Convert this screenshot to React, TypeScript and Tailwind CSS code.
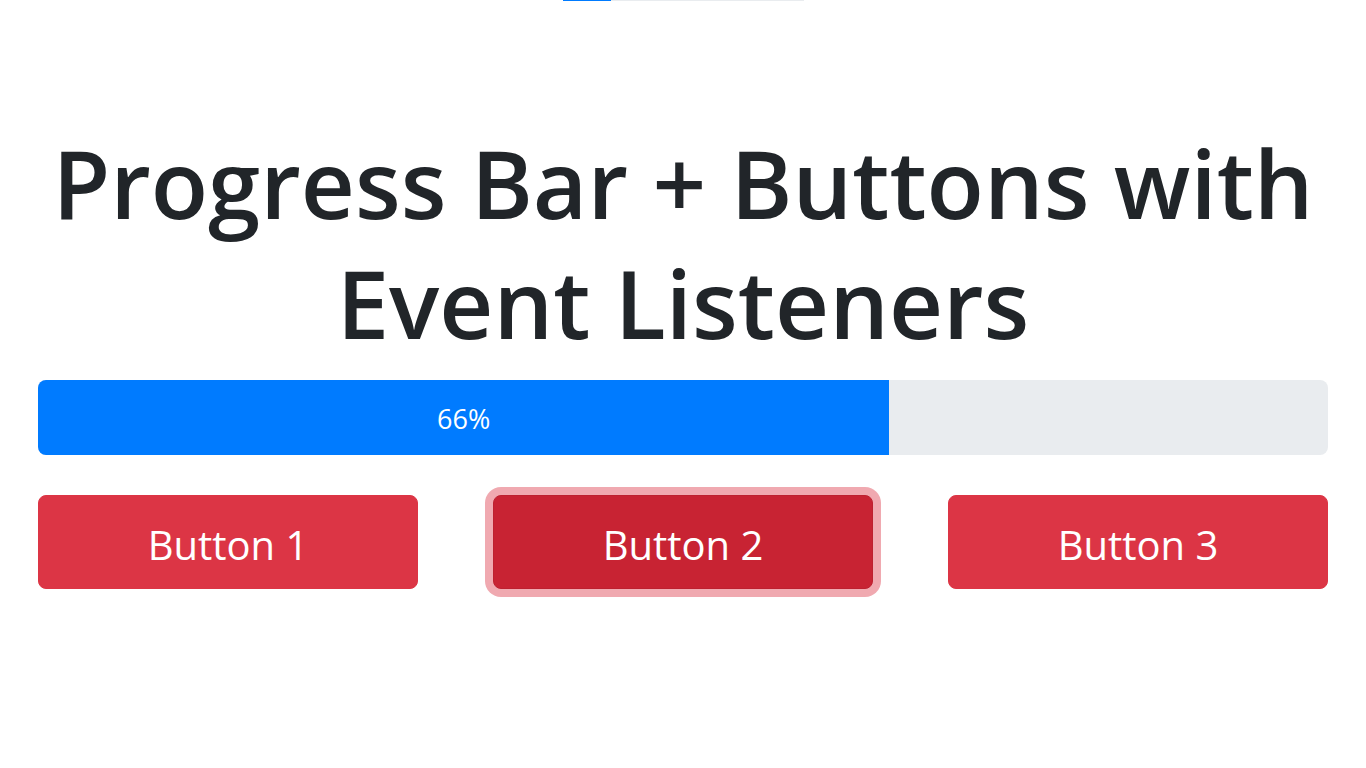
export default function App() {
  const progress = 66;

  return (
    <div className="min-h-screen bg-white font-['Open_Sans','Noto_Sans',sans-serif] text-[#212529]">
      <div className="mx-auto flex h-px w-[241px] bg-[#e9ecef]">
        <div className="h-full w-[20%] bg-[#007bff]" />
      </div>

      <div className="px-[38px]">
        <h1 className="mt-[122px] text-center text-[94px] font-semibold leading-[120px]">
          Progress Bar + Buttons with Event Listeners
        </h1>

        <div className="mt-[17px] flex h-[75px] overflow-hidden rounded-lg bg-[#e9ecef]">
          <div
            className="flex items-center justify-center bg-[#007bff] pt-[3px] text-[27px] text-white"
            style={{ width: `${progress}%` }}
          >
            {progress}%
          </div>
        </div>

        <div className="mt-10 grid grid-cols-3 gap-[75px]">
          <button className="rounded-lg border border-[#dc3545] bg-[#dc3545] pt-[19px] pb-[13px] text-[40px] leading-[60px] text-white">
            Button 1
          </button>
          <button className="rounded-lg border border-[#bd2130] bg-[#c82333] pt-[19px] pb-[13px] text-[40px] leading-[60px] text-white shadow-[0_0_0_8px_rgba(225,83,97,0.5)]">
            Button 2
          </button>
          <button className="rounded-lg border border-[#dc3545] bg-[#dc3545] pt-[19px] pb-[13px] text-[40px] leading-[60px] text-white">
            Button 3
          </button>
        </div>
      </div>
    </div>
  );
}
